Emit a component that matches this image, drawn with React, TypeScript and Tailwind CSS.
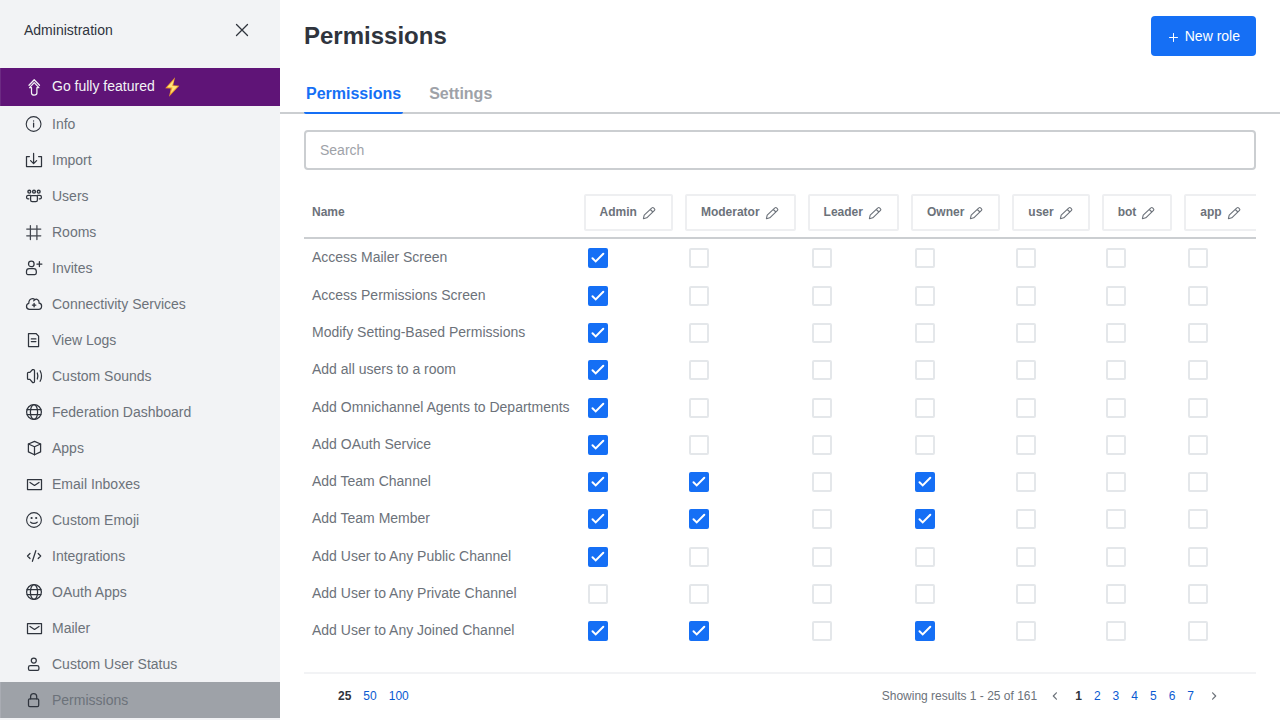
import React, { useState } from 'react';

type IconName =
  | 'info' | 'import' | 'team' | 'hash' | 'userPlus' | 'cloud' | 'doc' | 'sound' | 'globe'
  | 'cube' | 'mail' | 'emoji' | 'code' | 'user' | 'lock' | 'upgrade';

const icons: Record<IconName, React.ReactNode> = {
  info: (
    <>
      <circle cx="9.6" cy="10" r="7.4" strokeWidth="1.1" />
      <path d="M9.6 9v4" />
      <path d="M9.6 6.8v.2" />
    </>
  ),
  import: (
    <>
      <path d="M5.4 6.5H2.5v10h15v-10h-2.9" />
      <path d="M9.6 3.4v10M6.6 10.6l3 3 3-3" />
    </>
  ),
  team: (
    <>
      <circle cx="5.3" cy="5.7" r="1.4" strokeWidth="1.4" />
      <circle cx="10" cy="5.7" r="1.4" strokeWidth="1.4" />
      <circle cx="14.7" cy="5.7" r="1.4" strokeWidth="1.4" />
      <path d="M6.6 10.7c0-.6.4-1 1-1h4.8c.6 0 1 .4 1 1v3.2c0 .9-.7 1.6-1.6 1.6H8.2c-.9 0-1.6-.7-1.6-1.600z" />
      <path d="M6.500 9.300H4.300c-1 0-1.700.7-1.700 1.600v.6c0 .8.600 1.300 1.400 1.300h.8" />
      <path d="M13.500 9.300h2.200c1 0 1.700.7 1.700 1.600v.6c0 .8-.6 1.300-1.400 1.300h-.8" />
    </>
  ),
  hash: <path d="M6.400 3.500v14M12.900 3.500v14M2.700 7.100h14.100M2.700 13.800h14.100" stroke="#43474f" />,
  userPlus: (
    <>
      <circle cx="7.3" cy="5.900" r="2.800" />
      <path d="M2.500 13.300c0-1.700 1.100-2.800 2.700-2.800h4.400c1.600 0 2.700 1.100 2.700 2.800v1.800c0 .8-.6 1.400-1.400 1.400h-7c-.8 0-1.400-.6-1.400-1.400z" />
      <path d="M15.400 3.500v5M12.900 6h5" />
    </>
  ),
  cloud: (
    <>
      <path d="M5.600 15.400c-1.800 0-3.100-1.300-3.100-3.100 0-1.500 1-2.700 2.300-3C4.700 6.500 6.300 4.600 8.500 4.600c1 0 1.800.4 2.400 1 1.900-1 4.200.3 4.200 2.800v.8c1.500.1 2.500 1.300 2.500 2.900 0 1.900-1.200 3.300-3 3.300z" />
      <path d="M10.900 5.600c-.6.3-1 .7-1.200 1.300" />
      <path d="M10.100 9.400v3.400M8.400 11.100h3.400" strokeWidth="1.4" />
    </>
  ),
  doc: (
    <>
      <path d="M4.500 3.500h7.500l2.600 2.600v10.400H4.500z" />
      <path d="M7.300 8.900h4.600M7.300 11.600h4.600" />
    </>
  ),
  sound: (
    <>
      <path d="M10.500 4.400c0-.6-.3-.9-.9-.9h-1L5.900 6.400H4.400c-.5 0-.9.4-.9.9v5.200c0 .5.4.9.9.9h1.500l2.700 3.100h1c.6 0 .9-.3.9-.9z" />
      <path d="M13.300 7c.7 1.900.7 4.100 0 6M16.100 4.700c1.700 3.200 1.700 7.400 0 10.600" />
    </>
  ),
  globe: (
    <>
      <circle cx="10" cy="10" r="7.400" />
      <ellipse cx="10" cy="10" rx="3.600" ry="7.400" />
      <path d="M3.100 7.500h13.800M3.100 12.500h13.800" />
    </>
  ),
  cube: (
    <>
      <path d="M10.500 3.400l6.100 2.600v7.900l-6.100 2.900-6.100-2.900V6z" />
      <path d="M4.400 6l6.100 2.700L16.600 6M10.500 8.700v8.100" />
    </>
  ),
  mail: (
    <>
      <path d="M3.500 5.500h14v10h-14z" />
      <path d="M6 8.400l4.500 3 4.500-3" />
    </>
  ),
  emoji: (
    <>
      <circle cx="10" cy="10" r="7.400" strokeWidth="1.1" />
      <circle cx="7.600" cy="8" r="1.1" fill="currentColor" stroke="none" />
      <circle cx="12.200" cy="8" r="1.1" fill="currentColor" stroke="none" />
      <path d="M6.500 12.100c1.600 1.800 5.200 1.800 6.800 0" />
    </>
  ),
  code: <path d="M6 7.500L3.500 10 6 12.500M14.200 7.500l2.500 2.500-2.500 2.500M11.800 4.700L8.400 15.300" />,
  user: (
    <>
      <circle cx="9.800" cy="6.600" r="2.500" />
      <path d="M4.500 13.300c0-1.100.8-1.800 1.900-1.800H13c1.100 0 1.900.7 1.900 1.800v1.800c0 .8-.5 1.300-1.300 1.300H5.800c-.8 0-1.300-.5-1.300-1.300z" />
    </>
  ),
  lock: (
    <>
      <rect x="4.500" y="8.800" width="10.200" height="7.700" rx="1.300" />
      <path d="M6.600 8.800V6.500c0-4 6.100-4 6.100 0v2.300" />
    </>
  ),
  upgrade: (
    <>
      <path d="M7.500 10.700H5.600L10.200 5.600l4.700 5.100h-2v5.400c0 2.700-5.400 2.700-5.400 0z" />
      <path d="M5 8.300l5.200-5.600 5.300 5.600" />
    </>
  ),
};

function Icon({ name }: { name: IconName }) {
  return (
    <svg viewBox="0 0 20 20" className="size-5 shrink-0" fill="none" stroke="currentColor" strokeWidth="1.25" strokeLinecap="round" strokeLinejoin="round" aria-hidden="true">
      {icons[name]}
    </svg>
  );
}

const menu: { label: string; icon: IconName }[] = [
  { label: 'Info', icon: 'info' },
  { label: 'Import', icon: 'import' },
  { label: 'Users', icon: 'team' },
  { label: 'Rooms', icon: 'hash' },
  { label: 'Invites', icon: 'userPlus' },
  { label: 'Connectivity Services', icon: 'cloud' },
  { label: 'View Logs', icon: 'doc' },
  { label: 'Custom Sounds', icon: 'sound' },
  { label: 'Federation Dashboard', icon: 'globe' },
  { label: 'Apps', icon: 'cube' },
  { label: 'Email Inboxes', icon: 'mail' },
  { label: 'Custom Emoji', icon: 'emoji' },
  { label: 'Integrations', icon: 'code' },
  { label: 'OAuth Apps', icon: 'globe' },
  { label: 'Mailer', icon: 'mail' },
  { label: 'Custom User Status', icon: 'user' },
  { label: 'Permissions', icon: 'lock' },
];

const roles = ['Admin', 'Moderator', 'Leader', 'Owner', 'user', 'bot', 'app'];

const permissions: { name: string; granted: string[] }[] = [
  { name: 'Access Mailer Screen', granted: ['Admin'] },
  { name: 'Access Permissions Screen', granted: ['Admin'] },
  { name: 'Modify Setting-Based Permissions', granted: ['Admin'] },
  { name: 'Add all users to a room', granted: ['Admin'] },
  { name: 'Add Omnichannel Agents to Departments', granted: ['Admin'] },
  { name: 'Add OAuth Service', granted: ['Admin'] },
  { name: 'Add Team Channel', granted: ['Admin', 'Moderator', 'Owner'] },
  { name: 'Add Team Member', granted: ['Admin', 'Moderator', 'Owner'] },
  { name: 'Add User to Any Public Channel', granted: ['Admin'] },
  { name: 'Add User to Any Private Channel', granted: [] },
  { name: 'Add User to Any Joined Channel', granted: ['Admin', 'Moderator', 'Owner'] },
];

function Sidebar() {
  return (
    <aside className="flex w-70 shrink-0 flex-col overflow-hidden bg-[#f2f3f5]">
      <div className="flex h-15 shrink-0 items-center justify-between px-6">
        <h2 className="text-sm text-[#2f343d]">Administration</h2>
        <button type="button" aria-label="Close" className="flex size-7 items-center justify-center text-[#2f343d]">
          <svg viewBox="0 0 20 20" className="size-5" fill="none" stroke="currentColor" strokeWidth="1.3" strokeLinecap="round" aria-hidden="true">
            <path d="M4.500 4.500l11 11M15.500 4.500l-11 11" />
          </svg>
        </button>
      </div>
      <nav className="flex flex-col pt-2 text-sm text-[#6c727a]">
        <a href="#upgrade" className="flex h-9.5 shrink-0 items-center gap-2 border-l border-[#6c2a83] bg-[#5f1477] pr-6 pl-[23px] text-[#f2f3f5]">
          <Icon name="upgrade" />
          <span className="pb-0.5">Go fully featured</span>
          <svg viewBox="0 0 20 20" className="size-5" aria-hidden="true">
            <path d="M12.100.3L2.200 11.300l5.600.2L6 19.700 16.300 8.700l-6.100-.5z" fill="#f0a12a" />
            <path d="M11 2.700L4.200 10.300l5.300.2-1.900 6 7.100-7.200-5.600-.2z" fill="#ffe47a" />
          </svg>
        </a>
        {menu.map(({ label, icon }) => {
          const active = label === 'Permissions';
          return (
            <a
              key={label}
              href="#"
              aria-current={active ? 'page' : undefined}
              className={
                active
                  ? 'flex h-9 shrink-0 items-center gap-2 border-l border-[#a9acb3] bg-[#9ea2a8] pr-6 pl-[23px]'
                  : 'flex h-9 shrink-0 items-center gap-2 px-6'
              }
            >
              <span className="text-[#2f343d]"><Icon name={icon} /></span>
              {label}
            </a>
          );
        })}
      </nav>
    </aside>
  );
}

function PermissionBox({ label, initial }: { label: string; initial: boolean }) {
  const [checked, setChecked] = useState(initial);
  return (
    <label className="grid size-5">
      <input
        type="checkbox"
        aria-label={label}
        checked={checked}
        onChange={() => setChecked(!checked)}
        className="col-start-1 row-start-1 size-5 appearance-none rounded-xs border-2 border-[#e4e7ea] bg-white checked:border-[#156ff5] checked:bg-[#156ff5]"
      />
      {checked && (
        <svg viewBox="0 0 20 20" className="pointer-events-none col-start-1 row-start-1 size-5" fill="none" stroke="white" strokeWidth="2" strokeLinecap="round" aria-hidden="true">
          <path d="M4.500 10.300l3.200 3.100 7.600-7.700" />
        </svg>
      )}
    </label>
  );
}

function PermissionsTable() {
  return (
    <div className="mt-6 mb-[22px] min-h-0 flex-1 overflow-auto [scrollbar-width:none]">
      <table className="h-full w-max border-collapse text-left">
        <thead>
          <tr className="h-[44px] border-b-2 border-[#cbced1]">
            <th scope="col" className="pb-2 pl-2 text-xs font-bold text-[#6c727a]">Name</th>
            {roles.map((role) => (
              <th key={role} scope="col" className="pr-2 pb-1.5 pl-1 align-top">
                <button type="button" className="flex h-[37px] items-center gap-1 rounded-xs border-2 border-[#eeeff1] px-3.5 text-xs font-bold text-[#6c727a]">
                  <span className="pb-0.5">{role}</span>
                  <svg viewBox="0 0 16 16" className="size-4" fill="none" stroke="currentColor" strokeWidth="1.1" strokeLinejoin="round" aria-hidden="true">
                    <path d="M2.400 13.700l.8-3.500 7.700-7.300c.5-.5 1.200-.5 1.700 0l.9.900c.5.500.5 1.100 0 1.600l-7.700 7.400z" />
                    <path d="M9.300 4.500l2.600 2.500" />
                  </svg>
                </button>
              </th>
            ))}
          </tr>
        </thead>
        <tbody>
          {permissions.map(({ name, granted }) => (
            <tr key={name}>
              <th scope="row" className="pr-2.5 pb-0.5 pl-2 text-sm font-normal text-[#6c727a]">{name}</th>
              {roles.map((role) => (
                <td key={role} className="pl-2">
                  <PermissionBox label={`${name}: ${role}`} initial={granted.includes(role)} />
                </td>
              ))}
            </tr>
          ))}
        </tbody>
      </table>
    </div>
  );
}

function Chevron({ d }: { d: string }) {
  return (
    <svg viewBox="0 0 16 16" className="size-4" fill="none" stroke="currentColor" strokeWidth="1.2" strokeLinecap="round" strokeLinejoin="round" aria-hidden="true">
      <path d={d} />
    </svg>
  );
}

function Pagination() {
  return (
    <footer className="flex h-12 shrink-0 items-center justify-between border-t-2 border-[#f2f3f5] px-[34px] pb-0.5 text-xs text-[#6c727a]">
      <div className="flex gap-3 text-[#095ad2]">
        <button type="button" className="font-bold text-[#2f343d]">25</button>
        <button type="button">50</button>
        <button type="button">100</button>
      </div>
      <div className="flex items-center gap-2.5">
        <span>Showing results 1 - 25 of 161</span>
        <nav aria-label="Pages" className="flex items-center gap-3 text-[#095ad2]">
          <button type="button" aria-label="Previous page" className="text-[#6c727a]"><Chevron d="M9.400 4.800L6.300 8l3.100 3.200" /></button>
          <button type="button" className="font-bold text-[#2f343d]">1</button>
          {[2, 3, 4, 5, 6, 7].map((page) => (
            <button key={page} type="button">{page}</button>
          ))}
          <button type="button" aria-label="Next page" className="text-[#6c727a]"><Chevron d="M6.600 4.800L9.700 8l-3.100 3.200" /></button>
        </nav>
      </div>
    </footer>
  );
}

export default function App() {
  return (
    <div className="flex h-screen bg-white font-['Liberation_Sans',Arial,sans-serif]">
      <Sidebar />
      <main className="flex min-w-0 flex-1 flex-col">
        <header className="flex h-18 shrink-0 items-center justify-between px-6">
          <h1 className="text-2xl font-bold text-[#2f343d]">Permissions</h1>
          <button type="button" className="flex h-10 items-center gap-0.5 rounded-sm bg-[#156ff5] px-4 text-sm text-white">
            <svg viewBox="0 0 16 16" className="size-4" fill="none" stroke="currentColor" strokeWidth="1" strokeLinecap="round" aria-hidden="true">
              <path d="M6.500 5.500v8M2.500 9.500h8" />
            </svg>
            New role
          </button>
        </header>
        <div role="tablist" className="flex h-[42px] shrink-0 gap-6 border-b-2 border-[#cbced1] px-6 font-bold">
          <button type="button" role="tab" aria-selected="true" className="-mb-0.5 rounded-xs border-b-2 border-[#156ff5] px-0.5 pt-1 text-[#156ff5]">Permissions</button>
          <button type="button" role="tab" aria-selected="false" className="-mb-0.5 border-b-2 border-transparent px-0.5 pt-1 text-[#9ea2a8]">Settings</button>
        </div>
        <div className="flex min-h-0 flex-1 flex-col px-6 pt-4">
          <input
            type="search"
            aria-label="Search"
            placeholder="Search"
            className="h-10 shrink-0 rounded-sm border-2 border-[#cbced1] px-3.5 text-sm text-[#2f343d] placeholder:text-[#9ea2a8]"
          />
          <PermissionsTable />
          <Pagination />
        </div>
      </main>
    </div>
  );
}
